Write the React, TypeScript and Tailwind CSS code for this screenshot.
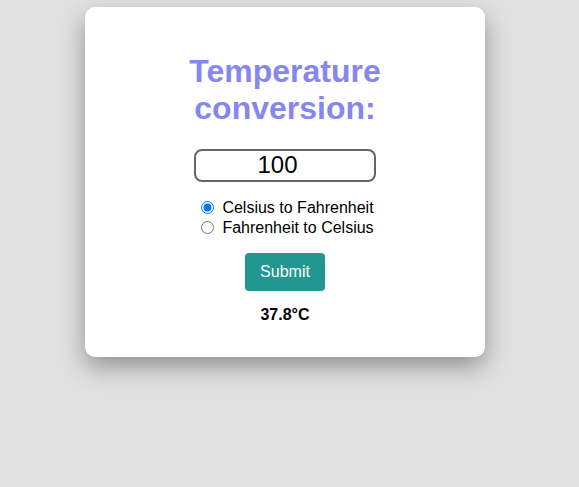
import React, { useState } from "react";

export default function App() {
  const [val, setVal] = useState("100");
  const [mode, setMode] = useState("c2f");
  return (
    <div className="min-h-[487px] bg-[#e1e1e1] pt-[7px] font-['Liberation_Sans',Arial,sans-serif]">
      <div className="ml-[85px] w-[400px] h-[350px] bg-white rounded-[10px] shadow-[0_10px_25px_rgba(0,0,0,0.35)] flex flex-col items-center pt-[45px]">
        <h1 className="text-[32px] leading-[36.8px] font-bold text-[#8686ef] text-center w-[220px] mt-px">
          Temperature conversion:
        </h1>
        <input
          type="text"
          value={val}
          onChange={(e) => setVal(e.target.value)}
          className="mt-[22px] w-[182px] h-[33px] border-2 border-[#666] rounded-[8px] text-center text-[24px] text-black outline-none pr-[15px]"
        />
        <div className="mt-[16px] flex flex-col text-[16px] leading-[20px] text-black">
          <label className="flex items-center">
            <input type="radio" name="m" checked={mode === "c2f"} onChange={() => setMode("c2f")} className="w-[13px] h-[13px] ml-[5px] mr-[8px] accent-[#0075ff]" />
            Celsius to Fahrenheit
          </label>
          <label className="flex items-center">
            <input type="radio" name="m" checked={mode === "f2c"} onChange={() => setMode("f2c")} className="w-[13px] h-[13px] ml-[5px] mr-[8px]" />
            Fahrenheit to Celsius
          </label>
        </div>
        <button className="mt-[15px] w-[80px] h-[38px] bg-[#229691] text-white text-[16px] rounded-[4px]">Submit</button>
        <p className="mt-[15px] text-[16px] font-bold leading-[18px] text-black">37.8°C</p>
      </div>
    </div>
  );
}
